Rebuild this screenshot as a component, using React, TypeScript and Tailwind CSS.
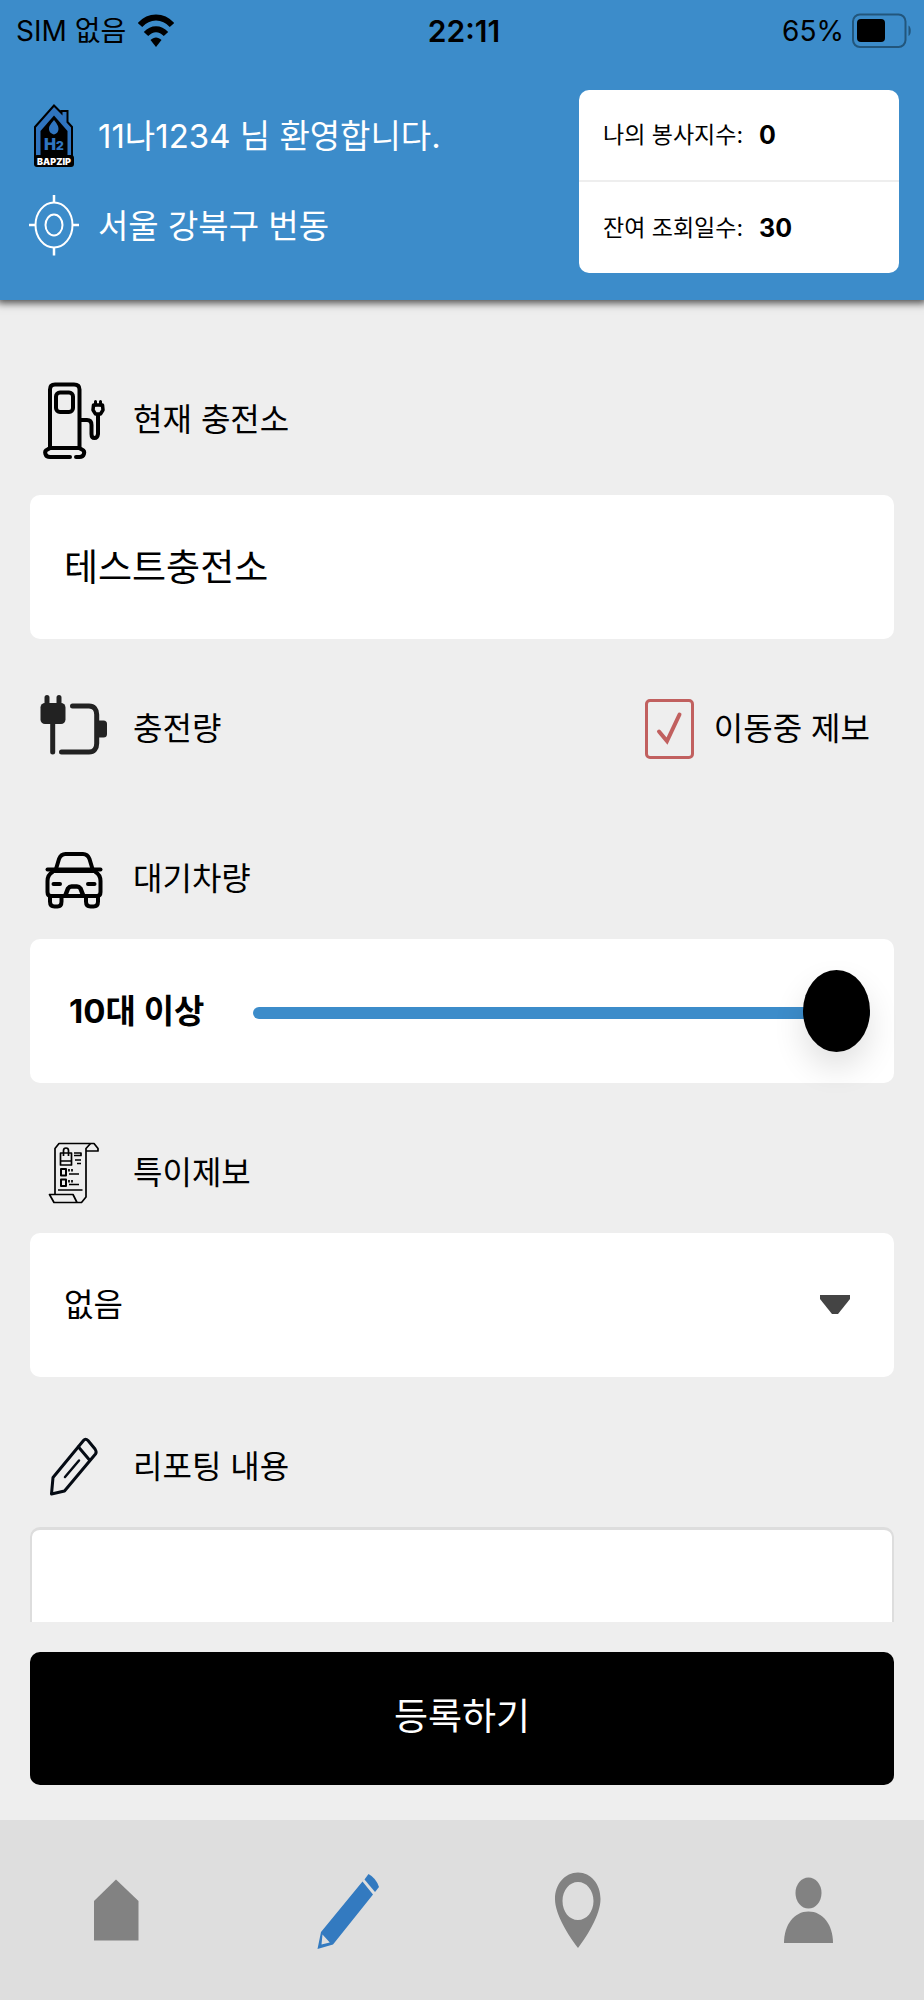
import { useState } from "react";
import type { ReactNode } from "react";

const WifiIcon = () => (
   <svg width="36" height="34" viewBox="0 0 36 34" fill="none">
      <path d="M2 11C11 1 25 1 34 11" stroke="#000" strokeWidth="6" />
      <path d="M8 20C14 13.5 22 13.5 28 20" stroke="#000" strokeWidth="6" />
      <path d="M12.5 26C16 22.5 20 22.5 23.5 26L18 33Z" fill="#000" />
   </svg>
);

const BatteryIcon = () => (
   <svg width="60" height="36" viewBox="0 0 60 36" fill="none">
      <rect x="1" y="1.5" width="52.5" height="32.5" rx="7" stroke="#22567c" strokeWidth="2" />
      <rect x="5" y="6" width="28" height="23" rx="4" fill="#000" />
      <path d="M56.5 12.5c3 1.5 3 9 0 10.5Z" fill="#22567c" />
   </svg>
);

const LogoIcon = () => (
   <svg width="52" height="72" viewBox="0 0 52 72">
      <path
         d="M7 62V27L26 5.5L33.5 13V11H39.5V22L44 27V62Z"
         fill="#2f74bf"
         stroke="#000"
         strokeWidth="2"
      />
      <path d="M12.5 58V31L26 15.5L39.5 31V58Z" fill="#000" />
      <path
         d="M26 20C28 23 30.5 25 30.5 29C30.5 32 28.5 34 26 34.5C23.5 34 21 32 21 29C21 25 24 23 26 20Z"
         fill="#2f74bf"
      />
      <text x="26" y="50" fontSize="16" fontWeight="900" fontFamily="Inter, sans-serif" fill="#2f74bf" textAnchor="middle">
         H<tspan fontSize="12">2</tspan>
      </text>
      <rect x="6" y="55" width="40" height="12" rx="3" fill="#000" />
      <text x="26" y="65" fontSize="9" fontWeight="900" fontFamily="Inter, sans-serif" fill="#fff" textAnchor="middle">
         BAPZIP
      </text>
   </svg>
);

const TargetIcon = () => (
   <svg width="52" height="72" viewBox="0 0 52 72" fill="none" stroke="#fff" strokeWidth="2">
      <ellipse cx="26" cy="35" rx="18.5" ry="22.5" />
      <ellipse cx="26" cy="35" rx="8.5" ry="10.5" />
      <path d="M26 5V13M26 57V65.5M1 35H8M44 35H51" strokeWidth="2.5" />
   </svg>
);

const StationIcon = () => (
   <svg width="68" height="80" viewBox="0 0 68 80" fill="none" stroke="#000" strokeWidth="4" strokeLinecap="round" strokeLinejoin="round">
      <path d="M10 67V9.5Q10 4.5 15 4.5H34Q39.5 4.5 39.5 9.5V67" />
      <rect x="16" y="12.5" width="17" height="19.5" rx="4" />
      <path d="M30 77H10C5 77 3.5 71 7.5 69.5L10 68H39L42 69.5C46 71.5 44 77 39.5 77H36" />
      <path d="M40 40H47Q51.5 40 51.5 45V54Q51.5 58 54.5 58T58 54V35" />
      <path d="M53.5 25H62.5L63 30L60.5 34H55.5L53 30Z" strokeWidth="3.5" />
      <path d="M55.5 21.5V25M60.5 21.5V25" strokeWidth="3" />
   </svg>
);

const ChargeIcon = () => (
   <svg width="68" height="80" viewBox="0 0 68 80" fill="none" stroke="#222" strokeWidth="5" strokeLinecap="round">
      <path d="M7 8.5V16M19 8.5V16" />
      <rect x="0.5" y="14" width="25" height="21" rx="4.5" fill="#222" stroke="none" />
      <path d="M12.7 34V63" />
      <path d="M32.5 17H49C54 17 56.7 20.5 56.7 25.5V54.5C56.7 59.5 54 63 49 63H21.5" />
      <rect x="56" y="31.5" width="11" height="17" rx="3.5" fill="#222" stroke="none" />
   </svg>
);

const CarIcon = () => (
   <svg width="68" height="80" viewBox="0 0 68 80" fill="none" stroke="#000" strokeWidth="4" strokeLinecap="round" strokeLinejoin="round">
      <path d="M16 30L19 20Q21 15 25.5 15H43Q47.5 15 49.5 20L52.5 30" />
      <path d="M7.5 30.5H60.5" />
      <path d="M14 32.5H54" strokeWidth="3" />
      <path d="M12.5 33Q7.5 36 7.5 42V53Q7.5 57 11 57H57Q60.5 57 60.5 53V42Q60.5 36 55.5 33" />
      <path d="M10 58V62.5Q10 67.5 14.5 67.5H17.5Q21.5 67.5 21.5 62.5V58M46 58V62.5Q46 67.5 50.5 67.5H53.5Q58 67.5 58 62.5V58" />
      <path d="M13.5 45H20M48 45H54.5" />
      <path d="M25.5 56L28 49.5Q29.5 47.5 31.5 47.5H37Q39 47.5 40.5 49.5L43 56" strokeWidth="4.5" />
   </svg>
);

const ReceiptIcon = () => (
   <svg width="68" height="80" viewBox="0 0 68 80" fill="none" stroke="#000" strokeWidth="1.7" strokeLinejoin="round">
      <path d="M15 61V15.5L19 10.5H54L58 15.5V18H46" />
      <path d="M50.5 10.5L46 15.5V64L41.5 69.5H14L9.5 61.5H33L37 69.5" />
      <path d="M20.5 20H31.5V32H20.5ZM20.5 28H31.5M23.5 23V17.5Q23.5 15 26 15T28.5 17.5V23" />
      <path d="M34 20H41V22.5H34M35 27H41M37 30.5H41" />
      <path d="M21 36H26V42.5H21ZM21 46.5H26V53H21Z" strokeWidth="2" />
      <path d="M29 36V38.5M32 36V38.5M29 47V49.5M32 47V49.5" />
      <path d="M29 41H39M29 51.5H39M18 57H42.5" />
   </svg>
);

const PencilIcon = () => (
   <svg width="68" height="80" viewBox="0 0 68 80" fill="none" stroke="#050b14" strokeWidth="3" strokeLinecap="round" strokeLinejoin="round">
      <path d="M11.5 67L13 50.5L43.5 13.5Q45.5 11 48 13.5L55 22Q57 25 55.5 27L24.5 64Z" />
      <path d="M38.5 20L49.5 33" />
      <path d="M39 33.5L25 50" strokeWidth="2.5" />
   </svg>
);

const NavHome = () => (
   <svg width="70" height="80" viewBox="0 0 70 80" fill="#828282">
      <path d="M35 9.5L57.5 31V70.5H13V31Z" />
   </svg>
);

const NavPencil = () => (
   <svg width="70" height="80" viewBox="0 0 70 80" fill="#337ac0">
      <path fillRule="evenodd" d="M5.5 79L9 62L50.5 11.5L61 24.5L21 74.5ZM10.5 64.5L17.8 72.5L9.5 74.5Z" />
      <path d="M52.5 9.5L56.5 4Q64 8 67 17L63 22Z" />
   </svg>
);

const NavPin = () => (
   <svg width="70" height="80" viewBox="0 0 70 80" fill="#828282">
      <path
         fillRule="evenodd"
         d="M35 2.5C48 2.5 57.5 14 57.5 29C57.5 44 45 65 35 78C25 65 12 44 12 29C12 14 22 2.5 35 2.5ZM35 12C26.5 12 19.5 20 19.5 31S26.5 50 35 50S50.5 42 50.5 31S43.5 12 35 12Z"
      />
   </svg>
);

const NavUser = () => (
   <svg width="70" height="80" viewBox="0 0 70 80" fill="#828282">
      <ellipse cx="34.5" cy="23" rx="13" ry="15.5" />
      <path d="M10 73C10 55 20 41.5 34.5 41.5S59 55 59 73Z" />
   </svg>
);

type TTitle = {
   icon: ReactNode;
   text: string;
   htmlFor?: string;
};

const Title = ({ icon, text, htmlFor }: TTitle) => (
   <div className="flex items-center gap-[15px]">
      <div className="w-[88px] flex justify-center">{icon}</div>
      <label htmlFor={htmlFor} className="text-[32px] leading-10">
         {text}
      </label>
   </div>
);

const menus = [
   { name: "홈", icon: <NavHome /> },
   { name: "제보", icon: <NavPencil /> },
   { name: "지도", icon: <NavPin /> },
   { name: "내 정보", icon: <NavUser /> },
];

const App = () => {
   const [station, setStation] = useState("테스트충전소");
   const [moving, setMoving] = useState(true);
   const [cars, setCars] = useState(10);

   return (
      <div className="h-screen flex flex-col overflow-hidden bg-[#eeeeee] text-black font-['Inter','Noto_Sans_CJK_KR',sans-serif]">
         <header className="relative z-10 bg-[#3c8cca] pb-[27px] shadow-[0_0_8px_3px_rgba(0,0,0,0.7)]">
            <div className="h-[62px] grid grid-cols-3 items-center pl-4 pr-3 text-[28px] leading-9">
               <div className="flex items-center gap-3">
                  <span>SIM 없음</span>
                  <WifiIcon />
               </div>
               <span className="text-center text-[30px] font-semibold">22:11</span>
               <div className="flex items-center justify-end gap-2">
                  <span>65%</span>
                  <BatteryIcon />
               </div>
            </div>
            <div className="flex justify-between pt-7 pl-7 pr-[25px]">
               <div className="text-white text-[33px] leading-10">
                  <div className="h-[92px] flex items-center gap-[18px]">
                     <LogoIcon />
                     <span>11나1234 님 환영합니다.</span>
                  </div>
                  <div className="h-[88px] flex items-center gap-[18px]">
                     <TargetIcon />
                     <span>서울 강북구 번동</span>
                  </div>
               </div>
               <div className="w-80 bg-white rounded-[10px] text-[23px] leading-8">
                  <div className="h-[92px] flex items-center gap-4 px-6 border-b-2 border-[#eeeeee]">
                     <span>나의 봉사지수:</span>
                     <b className="text-[25px]">0</b>
                  </div>
                  <div className="h-[91px] flex items-center gap-4 px-6">
                     <span>잔여 조회일수:</span>
                     <b className="text-[25px]">30</b>
                  </div>
               </div>
            </div>
         </header>

         <main className="flex-1 min-h-0 overflow-y-auto [scrollbar-width:none] px-[30px]">
            <div className="h-[150px] mt-[45px] flex items-center">
               <Title icon={<StationIcon />} text="현재 충전소" htmlFor="station" />
            </div>
            <input
               type="text"
               id="station"
               value={station}
               onChange={(e) => setStation(e.target.value)}
               className="block w-full h-36 bg-white rounded-[10px] px-[34px] pb-1 text-[37px] outline-none"
            />

            <div className="h-[180px] flex items-center justify-between pr-6">
               <Title icon={<ChargeIcon />} text="충전량" />
               <label className="flex items-center gap-5 text-[32px] leading-10">
                  <span className="relative">
                     <input
                        type="checkbox"
                        checked={moving}
                        onChange={(e) => setMoving(e.target.checked)}
                        className="block appearance-none w-[49px] h-[60px] border-[3px] border-[#c1605f] rounded-[5px]"
                     />
                     {moving && (
                        <svg
                           className="absolute inset-0 pointer-events-none"
                           width="49"
                           height="60"
                           viewBox="0 0 49 60"
                           fill="none"
                           stroke="#c1605f"
                           strokeWidth="4"
                           strokeLinecap="round"
                        >
                           <path d="M14 32.5L22 42L34.5 15.5" />
                        </svg>
                     )}
                  </span>
                  이동중 제보
               </label>
            </div>

            <div className="h-[120px] flex items-center">
               <Title icon={<CarIcon />} text="대기차량" htmlFor="cars" />
            </div>
            <div className="h-36 bg-white rounded-[10px] flex items-center pl-[39px] pr-6">
               <span className="w-[184px] shrink-0 text-[33px] leading-10 font-bold">
                  {cars >= 10 ? "10대 이상" : `${cars}대`}
               </span>
               <input
                  type="range"
                  id="cars"
                  min={0}
                  max={10}
                  value={cars}
                  onChange={(e) => setCars(Number(e.target.value))}
                  className="flex-1 min-w-0 h-[82px] appearance-none bg-transparent [&::-webkit-slider-runnable-track]:h-3 [&::-webkit-slider-runnable-track]:mt-1 [&::-webkit-slider-runnable-track]:rounded-full [&::-webkit-slider-runnable-track]:bg-[#3c8cca] [&::-webkit-slider-thumb]:appearance-none [&::-webkit-slider-thumb]:w-[67px] [&::-webkit-slider-thumb]:h-[82px] [&::-webkit-slider-thumb]:-mt-[37px] [&::-webkit-slider-thumb]:rounded-[50%] [&::-webkit-slider-thumb]:bg-black [&::-webkit-slider-thumb]:shadow-[0_16px_32px_rgba(0,0,0,0.12)]"
               />
            </div>

            <div className="h-[120px] mt-[30px] flex items-center">
               <Title icon={<ReceiptIcon />} text="특이제보" htmlFor="issue" />
            </div>
            <div className="relative">
               <select
                  id="issue"
                  className="block appearance-none w-full h-36 bg-white rounded-[10px] px-[34px] text-[32px] outline-none"
               >
                  <option>없음</option>
               </select>
               <svg
                  className="absolute right-11 top-[62px] pointer-events-none"
                  width="30"
                  height="19"
                  viewBox="0 0 30 19"
                  fill="#444"
               >
                  <path d="M0 0H30V4L18 19H12L0 4Z" />
               </svg>
            </div>

            <div className="h-[120px] mt-[30px] flex items-center">
               <Title icon={<PencilIcon />} text="리포팅 내용" htmlFor="content" />
            </div>
            <textarea
               id="content"
               className="block w-full h-60 bg-white border-2 border-t-[3px] border-[#dddddd] rounded-[10px] p-8 text-[32px] resize-none outline-none"
            />
         </main>

         <div className="px-[30px] pt-[30px] pb-[35px]">
            <button
               type="button"
               className="block w-full h-[133px] pb-1 bg-black text-white text-[37px] rounded-[10px]"
            >
               등록하기
            </button>
         </div>

         <nav className="h-[180px] bg-[#dedede] grid grid-cols-4">
            {menus.map((menu) => (
               <a
                  key={menu.name}
                  href="#"
                  aria-label={menu.name}
                  className="flex items-center justify-center"
               >
                  {menu.icon}
               </a>
            ))}
         </nav>
      </div>
   );
};

export default App;
